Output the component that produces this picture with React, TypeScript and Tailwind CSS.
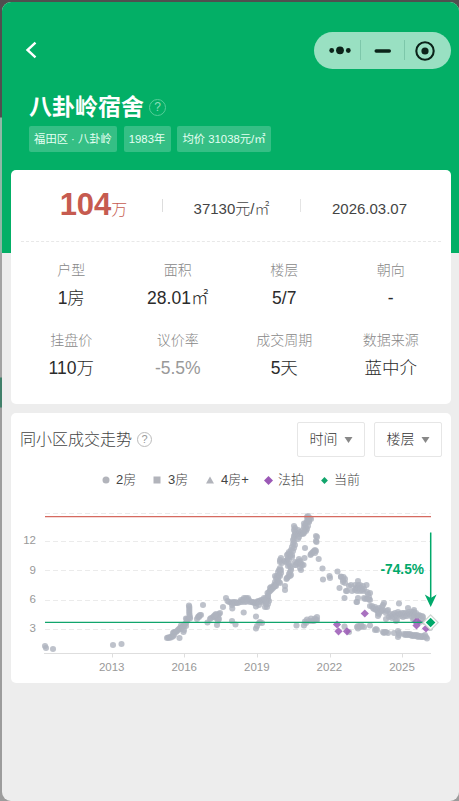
import React from "react";

const tags = [
  { text: "福田区 · 八卦岭", width: "w-[88px]" },
  { text: "1983年", width: "w-[47px]" },
  { text: "均价 31038元/㎡", width: "w-[94px]" },
];

const facts = [
  { label: "户型", value: "1房" },
  { label: "面积", value: "28.01㎡" },
  { label: "楼层", value: "5/7" },
  { label: "朝向", value: "-" },
  { label: "挂盘价", value: "110万" },
  { label: "议价率", value: "-5.5%", muted: true },
  { label: "成交周期", value: "5天" },
  { label: "数据来源", value: "蓝中介" },
];

// Sales plotted in chart coordinates.
const sales: [number, number][] = [
  [45, 646], [46, 648], [53, 649], [113, 645], [121.5, 644],
  // 2015 - 2016
  [167, 638], [168, 637.5], [169, 638], [170, 637], [171, 637.5], [172, 636], [173, 636.5], [174, 635],
  [173, 633], [174, 632], [175, 632], [176, 632], [177, 631], [178, 630], [179, 629], [180, 628], [181, 629],
  [182, 627], [181, 625.5], [183, 626], [184, 626], [185, 624], [186, 623], [186, 626], [187, 621], [188, 619],
  [183.5, 632], [184, 630], [179.5, 638], [186, 618.5], [187, 619], [190, 618.5], [189, 605.5], [189.3, 607],
  [189.3, 609], [189.3, 611], [189.3, 613], [189.5, 615], [189.8, 617], [203, 605],
  [197, 619], [198, 617], [199, 617], [199, 616], [200, 615], [201, 615], [207.5, 622.5],
  // 2017
  [210, 619], [211, 618], [213, 617], [214, 616], [215, 617], [216, 618], [217, 616], [218, 615], [219, 614],
  [218, 618], [219, 619], [220, 613], [216, 614], [215, 615], [217, 625], [218, 621], [223, 607],
  [226, 598], [227.5, 601], [229, 602], [231, 602.5], [232, 603], [233, 602], [234, 603], [235, 602],
  [236, 603], [237, 602.5], [238, 603], [232.3, 608.5], [232, 605], [232, 621], [235.5, 624.5],
  [240, 602], [241, 600], [242, 602], [243, 600], [244, 598], [245, 602], [246, 598], [247, 599],
  [248, 598], [249, 600], [250, 602], [244, 600], [247, 601.5], [252, 602], [253, 602], [254, 603],
  [255, 602.5], [256, 603], [257, 602], [258, 601], [259, 602], [260, 601], [261, 600], [262, 602],
  [263, 600], [264, 601], [265, 600], [266, 602], [267, 600], [268, 599], [269, 601], [256, 606.5],
  [259, 605], [265, 607], [267, 607], [268, 604], [268, 597], [266, 598], [264, 598], [266, 604],
  [243.7, 612.5], [256, 616.5], [256, 628.5], [257, 626], [260, 622], [262, 623], [259, 623],
  // 2019 climb
  [268, 595], [267.5, 593], [269, 592], [270, 591], [271, 590], [270, 588], [271, 587], [272, 589],
  [273, 588], [274, 587], [274, 585], [275, 586], [276, 584], [275, 582], [277, 582], [278, 580],
  [275, 576], [276, 578], [277, 576], [278, 578], [279, 575], [280, 576], [278, 572], [279, 570],
  [280, 571], [281, 573], [280, 568], [281, 570], [276, 586], [279, 582], [280, 583],
  [281, 558], [280, 560], [280, 562], [282, 563],
  [285, 590], [285, 586], [286.5, 579], [287, 578], [288, 577], [289, 574], [290, 572], [291, 570], [290, 576],
  [285, 561], [286, 562], [287, 560], [288, 558], [289, 560], [290, 556], [287, 555], [288, 554],
  [289, 552], [290, 554], [291, 550], [292, 555], [293, 551], [294, 548], [292, 547], [293, 544],
  [294, 542], [295, 545], [293, 540], [294, 538], [292, 557], [289, 564], [290, 566], [288, 566],
  [294, 536], [295, 534], [294, 530], [295, 532], [296, 535], [297, 533], [298, 530], [299, 534],
  [300, 532], [299, 537], [298, 539], [301, 534], [302, 533], [303, 534], [304, 533], [305, 530],
  [306, 531], [304, 527], [305, 525], [306, 523], [307, 521], [306, 527], [307, 529], [308, 526],
  [309, 522], [308, 518], [307, 517], [309, 519], [310, 518], [311, 519], [294, 526], [295, 528],
  [308, 516], [309, 521], [303, 530], [304, 523.5],
  [305, 548], [310.5, 555], [304.5, 558], [303.5, 565], [300, 561], [301, 563], [302, 565], [299, 564],
  [297, 563], [296, 565], [298, 562], [300, 568], [301, 570], [295, 565], [295, 562], [299, 559],
  [291, 575], [291, 568], [296.5, 625.5], [304, 625.5], [305, 621.5], [307, 619.5], [309, 621], [306, 623],
  [311, 618.5], [312, 621], [315, 618.5], [317, 617], [316, 620], [314, 621], [317, 620],
  // 2021 onwards
  [316, 536], [317, 537], [316, 541], [316.5, 542], [311, 554], [312, 553], [313, 552], [314, 551],
  [315, 550], [316, 551], [315, 553], [318.7, 559], [322.5, 568.5], [323, 579.5], [329.5, 576], [330, 578],
  [337.5, 571.5], [341, 576.5], [341, 577], [343, 580], [343.5, 577], [345, 579], [339.5, 588], [344.5, 598],
  [343, 582], [345, 583], [346, 591], [347, 591], [351, 585], [352, 591], [349, 586], [355, 585],
  [355, 590], [356, 588], [357, 588], [358, 581], [358, 585], [359, 587], [360, 585], [361, 588],
  [362, 590], [363, 586], [364, 589], [357, 591], [360, 591], [363, 591], [366.5, 585], [370, 593],
  [368, 594], [367, 592], [364, 598], [365, 599], [367, 598.5], [369, 597], [370, 600], [369, 599.5],
  [358, 598], [357, 602], [356.5, 602],
  [370, 606], [372, 606], [373, 608], [374, 609], [375, 607], [376, 610], [377, 609], [378, 611],
  [379, 608], [378, 613], [378, 616], [379, 614], [380, 612], [381, 610], [382, 607], [383, 605],
  [382, 611], [384, 603], [383, 610], [386, 613], [387, 611], [388, 610], [386, 619],
  [389, 617], [390, 614], [391, 616], [392, 618], [393, 614], [394, 617], [395, 613], [396, 615],
  [396, 621], [397, 616], [398, 612], [399, 614], [397, 620], [400, 614], [401, 616], [402, 613],
  [403, 617], [404, 613], [405, 616], [406, 613], [407, 616], [408, 614], [399, 603.5], [408, 608],
  [409, 612], [410, 614], [411, 616], [412, 612], [413, 614], [414, 612], [415, 615], [414, 610],
  [416, 613], [417, 616], [414, 618], [418, 616], [419, 615], [420, 616], [422, 616], [423, 620], [425, 622],
  [427, 622], [429, 625], [420, 622], [430, 628], [423, 617], [413, 619],
  [344.5, 626.5], [349, 632], [357, 627], [358, 626], [360, 627], [362, 626.5], [361, 625], [364, 627],
  [358, 628.5], [370, 625.5], [375, 630], [376, 629], [377, 630], [383, 632], [384, 633], [386, 632],
  [388, 633], [385, 632], [394, 633], [398, 637], [398, 631], [399, 633], [399, 635], [404, 634],
  [405, 635], [406, 634], [407, 635], [408, 634], [409, 635], [410, 634], [411, 635], [412, 636],
  [413, 635], [414, 636], [415, 635], [416, 636], [417, 635], [418, 637], [419, 636], [421, 637],
  [422, 637], [423, 636], [424, 637], [425, 635], [426, 637], [427, 638.5], [420, 636],
];

const auctions: [number, number][] = [
  [364.8, 613.5], [337, 624.5], [338.5, 631.3], [347, 631.3], [416, 622], [418, 622], [416.5, 625.5], [426, 628.5],
];

function Diamond({ x, y, r, fill }: { x: number; y: number; r: number; fill: string }) {
  return <path d={`M${x} ${y - r}l${r} ${r}l${-r} ${r}l${-r} ${-r}z`} fill={fill} />;
}

function Help({ light }: { light?: boolean }) {
  return light ? (
    <span className="flex size-[17px] items-center justify-center rounded-full border border-[#55ce99] text-[12px] leading-none text-[#8bddb9]">?</span>
  ) : (
    <span className="flex size-[15px] items-center justify-center rounded-full border border-[#bbb] text-[11px] leading-none text-[#999]">?</span>
  );
}

function Select({ label }: { label: string }) {
  return (
    <button className="flex h-[35px] w-[68px] items-center justify-center gap-[6px] rounded-[2px] border border-[#e6e6e6] text-[14px] font-light text-[#333]">
      <span>{label}</span>
      <svg width="9" height="6" viewBox="0 0 9 6"><path d="M.5 0h8L4.5 6z" fill="#888" /></svg>
    </button>
  );
}

function Chart() {
  return (
    <svg className="block" width="440" height="180" viewBox="11 500 440 180" fontFamily="'Liberation Sans', sans-serif">
      <g stroke="#ebebeb" strokeDasharray="5 3">
        {[513.5, 541.5, 570.5, 600.5, 629.5].map((y) => <path key={y} d={`M45 ${y}H431`} />)}
      </g>
      <path d="M44 653.5H431M112.5 653.5v4M184.5 653.5v4M257.5 653.5v4M330.5 653.5v4M402.5 653.5v4" stroke="#dedede" fill="none" />
      <g fill="#999" fontSize="11.5" textAnchor="end">
        <text x="36" y="544">12</text>
        <text x="36" y="573.5">9</text>
        <text x="36" y="603">6</text>
        <text x="36" y="632">3</text>
      </g>
      <g fill="#999" fontSize="11.5" textAnchor="middle">
        <text x="111.7" y="671">2013</text>
        <text x="184.2" y="671">2016</text>
        <text x="256.8" y="671">2019</text>
        <text x="329.4" y="671">2022</text>
        <text x="402" y="671">2025</text>
      </g>
      <g fill="#aeb3be" fillOpacity=".8">
        {sales.map(([x, y], i) => <circle key={i} cx={x} cy={y} r="3.05" />)}
      </g>
      <g opacity=".85">
        {auctions.map(([x, y], i) => <Diamond key={i} x={x} y={y} r={4.1} fill="#9b59b6" />)}
      </g>
      <path d="M45 516.6H431" stroke="#d56a60" strokeWidth="1.4" />
      <path d="M45 622.4H431" stroke="#11a56c" strokeWidth="1.3" />
      <path d="M430.7 532.5V598" stroke="#00a96a" strokeWidth="1.5" />
      <path d="M430.7 607L424.8 594.5L430.7 598L436.6 594.5z" fill="#00a96a" />
      <text x="424" y="573.5" textAnchor="end" fill="#00a96a" fontSize="14" fontWeight="700" textLength="43.5" lengthAdjust="spacingAndGlyphs">-74.5%</text>
      <Diamond x={430.6} y={622.5} r={8.4} fill="#cfd6d2" />
      <Diamond x={430.6} y={622.5} r={6.7} fill="#fff" />
      <Diamond x={430.6} y={622.5} r={4.8} fill="#00a96a" />
    </svg>
  );
}

function Capsule() {
  return (
    <div className="flex h-[37px] w-[137px] items-center rounded-full bg-[#99e0c2]">
      <svg width="137" height="37" viewBox="0 0 137 37" fill="#0b2319">
        <circle cx="17.7" cy="18.5" r="2.4" /><circle cx="26" cy="18.3" r="3.9" /><circle cx="34.3" cy="18.5" r="2.4" />
        <path d="M46.5 8v20M90.5 8v20" stroke="#7dc7aa" />
        <rect x="60.5" y="17.3" width="16.5" height="3.5" rx="1.7" />
        <circle cx="111" cy="19" r="8.7" fill="none" stroke="#0b2319" strokeWidth="2.1" /><circle cx="111" cy="19" r="3.6" />
      </svg>
    </div>
  );
}

export default function App() {
  return (
    <div className="h-[801px] w-[459px] overflow-hidden bg-[linear-gradient(#504f4f_0px,#504f4f_117px,#8fb8a6_118px,#8fb8a6_252px,#a3a3a3_253px,#a3a3a3_377px,#41806a_378px,#41806a_407px,#9c9c9c_408px)] pl-[1.5px] pt-[2px] font-['Liberation_Sans','Noto_Sans_CJK_SC',sans-serif]">
      <main className="h-[799px] w-[457.5px] overflow-hidden rounded-[9px] bg-[#ededed] pl-[.5px]">
        <header className="-ml-[.5px] h-[251px] bg-[#03af66] pt-[30px] text-white">
          <div className="flex h-[37px] items-center justify-between pl-[23.5px] pr-[8px]">
            <svg className="-mt-[2px]" width="13" height="18" viewBox="0 0 13 18"><path d="M10.5 1.7L2.5 9l8 7.4" fill="none" stroke="#fff" strokeWidth="2.4" /></svg>
            <Capsule />
          </div>
          <div className="mt-[20px] flex h-[36px] items-center gap-[5px] pl-[27.5px]">
            <h1 className="text-[23px] font-bold leading-[36px]">八卦岭宿舍</h1>
            <Help light />
          </div>
          <div className="mt-[1px] flex gap-[6.5px] pl-[27.5px]">
            {tags.map((t) => (
              <span key={t.text} className={`flex h-[26px] items-center justify-center whitespace-nowrap rounded-[2px] bg-[#35bf85] text-[11.3px] text-[#e4fff3] ${t.width}`}>{t.text}</span>
            ))}
          </div>
        </header>

        <section className="relative mx-[9px] -mt-[83px] h-[234px] w-[440px] rounded-[5px] bg-white px-[10px]">
          <div className="flex h-[72px] items-center border-b border-dashed border-[#e8e8e8] text-[16px] text-[#444]">
            <div className="-mt-[2px] flex w-[141px] items-baseline justify-center whitespace-nowrap pl-[4px] text-[#c65b50]">
              <span className="text-[31px] font-bold leading-[40px]">104</span>
              <span className="text-[16px] font-light">万</span>
            </div>
            <i className="mb-[1px] h-[13px] w-px bg-[#ddd]" />
            <div className="w-[137px] pt-[8px] text-center text-[15px] font-light">37130元/㎡</div>
            <i className="mb-[1px] h-[13px] w-px bg-[#e4e4e4]" />
            <div className="w-[137px] pt-[8px] text-center text-[15px]">2026.03.07</div>
          </div>
          <dl className="-mx-[3px] grid grid-cols-4 pt-[15px]">
            {facts.map((f) => (
              <div key={f.label} className="h-[70px] text-center">
                <dt className="h-[26px] text-[14px] font-light leading-[26px] text-[#888]">{f.label}</dt>
                <dd className={f.muted ? "text-[17.5px] leading-[30px] text-[#999]" : "text-[17.5px] font-light leading-[30px] text-[#2b2b2b]"}>{f.value}</dd>
              </div>
            ))}
          </dl>
        </section>

        <section className="mx-[9px] mt-[9px] h-[270px] w-[440px] rounded-[5px] bg-white pt-[9px]">
          <div className="flex items-center pl-[9px] pr-[9px]">
            <h2 className="text-[16px] font-light text-[#444]">同小区成交走势</h2>
            <span className="ml-[5px] flex-1"><Help /></span>
            <div className="flex gap-[9px]">
              <Select label="时间" />
              <Select label="楼层" />
            </div>
          </div>
          <div className="flex h-[43px] items-center pl-[91px] pt-[3px] text-[13px] font-light text-[#444]">
            <svg className="mr-[6px]" width="8" height="8"><circle cx="4" cy="4" r="3.5" fill="#b2b4bb" /></svg>
            <span className="w-[37px]">2房</span>
            <svg className="mr-[7px]" width="8" height="8"><rect width="7" height="7" x=".5" y=".5" fill="#b2b4bb" /></svg>
            <span className="w-[38px]">3房</span>
            <svg className="mr-[7px]" width="8" height="8"><path d="M4 .5l4 7H0z" fill="#b2b4bb" /></svg>
            <span className="w-[43px]">4房+</span>
            <svg className="mr-[5px]" width="9" height="9"><Diamond x={4.5} y={4.5} r={4.5} fill="#9b59b6" /></svg>
            <span className="w-[43px]">法拍</span>
            <svg className="mr-[6px]" width="7" height="7"><Diamond x={3.5} y={3.5} r={3.4} fill="#11a56c" /></svg>
            <span>当前</span>
          </div>
          <Chart />
        </section>
      </main>
    </div>
  );
}
